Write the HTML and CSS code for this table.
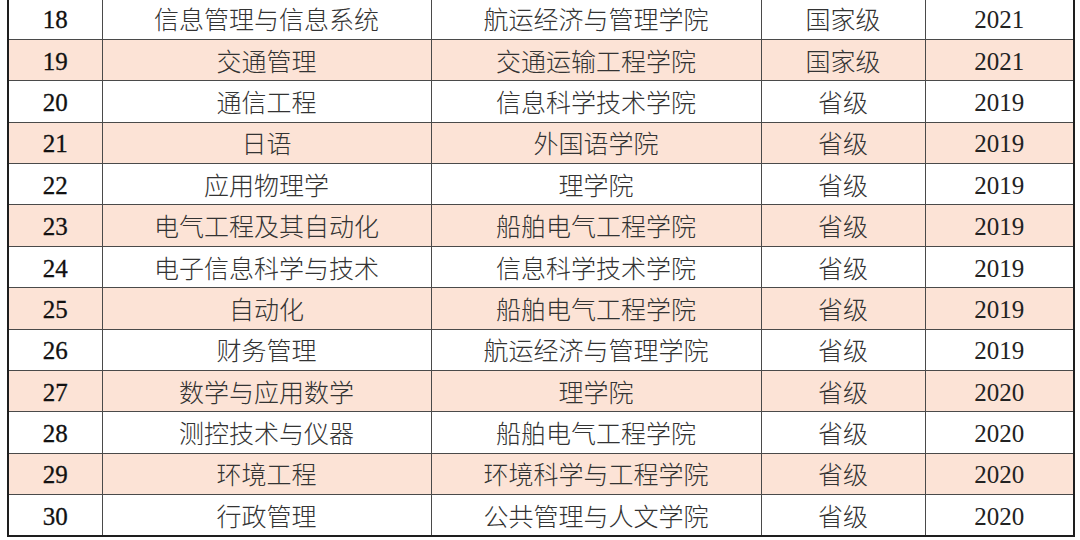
FILE: index.html
```html
<!DOCTYPE html>
<html lang="zh-CN">
<head>
<meta charset="utf-8">
<title>专业列表</title>
<link rel="stylesheet" href="styles.css">
</head>
<body>
<table class="majors">
  <colgroup>
    <col class="c-no">
    <col class="c-name">
    <col class="c-school">
    <col class="c-level">
    <col class="c-year">
  </colgroup>
  <tbody>
    <tr><td class="no"><span class="num">18</span></td><td>信息管理与信息系统</td><td>航运经济与管理学院</td><td>国家级</td><td class="yr"><span class="num">2021</span></td></tr>
    <tr class="alt"><td class="no"><span class="num">19</span></td><td>交通管理</td><td>交通运输工程学院</td><td>国家级</td><td class="yr"><span class="num">2021</span></td></tr>
    <tr><td class="no"><span class="num">20</span></td><td>通信工程</td><td>信息科学技术学院</td><td>省级</td><td class="yr"><span class="num">2019</span></td></tr>
    <tr class="alt"><td class="no"><span class="num">21</span></td><td>日语</td><td>外国语学院</td><td>省级</td><td class="yr"><span class="num">2019</span></td></tr>
    <tr><td class="no"><span class="num">22</span></td><td>应用物理学</td><td>理学院</td><td>省级</td><td class="yr"><span class="num">2019</span></td></tr>
    <tr class="alt"><td class="no"><span class="num">23</span></td><td>电气工程及其自动化</td><td>船舶电气工程学院</td><td>省级</td><td class="yr"><span class="num">2019</span></td></tr>
    <tr><td class="no"><span class="num">24</span></td><td>电子信息科学与技术</td><td>信息科学技术学院</td><td>省级</td><td class="yr"><span class="num">2019</span></td></tr>
    <tr class="alt"><td class="no"><span class="num">25</span></td><td>自动化</td><td>船舶电气工程学院</td><td>省级</td><td class="yr"><span class="num">2019</span></td></tr>
    <tr><td class="no"><span class="num">26</span></td><td>财务管理</td><td>航运经济与管理学院</td><td>省级</td><td class="yr"><span class="num">2019</span></td></tr>
    <tr class="alt"><td class="no"><span class="num">27</span></td><td>数学与应用数学</td><td>理学院</td><td>省级</td><td class="yr"><span class="num">2020</span></td></tr>
    <tr><td class="no"><span class="num">28</span></td><td>测控技术与仪器</td><td>船舶电气工程学院</td><td>省级</td><td class="yr"><span class="num">2020</span></td></tr>
    <tr class="alt"><td class="no"><span class="num">29</span></td><td>环境工程</td><td>环境科学与工程学院</td><td>省级</td><td class="yr"><span class="num">2020</span></td></tr>
    <tr><td class="no"><span class="num">30</span></td><td>行政管理</td><td>公共管理与人文学院</td><td>省级</td><td class="yr"><span class="num">2020</span></td></tr>
  </tbody>
</table>
</body>
</html>
```

FILE: styles.css
```css
html, body {
  margin: 0;
  padding: 0;
  background: #ffffff;
  overflow: hidden;
}

.majors {
  margin: -3px 0 0 7px;
  width: 1066px;
  border-collapse: collapse;
  table-layout: fixed;
  border: 2px solid #1e1e1e;
  font-family: "Noto Sans CJK SC", "Noto Sans", sans-serif;
  font-weight: 300;
  font-size: 25px;
  color: #333333;
}

.c-no { width: 94px; }
.c-name { width: 329px; }
.c-school { width: 330px; }
.c-level { width: 164px; }
.c-year { width: 149px; }

.majors tr {
  height: 41.4px;
}

.majors td {
  border: 1px solid #4a4a4a;
  padding: 0;
  text-align: center;
  vertical-align: middle;
  line-height: 1;
  white-space: nowrap;
}

.majors tr.alt td {
  background: #fce3d6;
}

.num {
  font-family: "Liberation Serif", "Tinos", "Times New Roman", "DejaVu Serif", serif;
  font-weight: 400;
  font-size: 25px;
}

.no .num {
  color: #111111;
  -webkit-text-stroke: 0.3px #111111;
}

.yr .num {
  color: #222222;
}
```
